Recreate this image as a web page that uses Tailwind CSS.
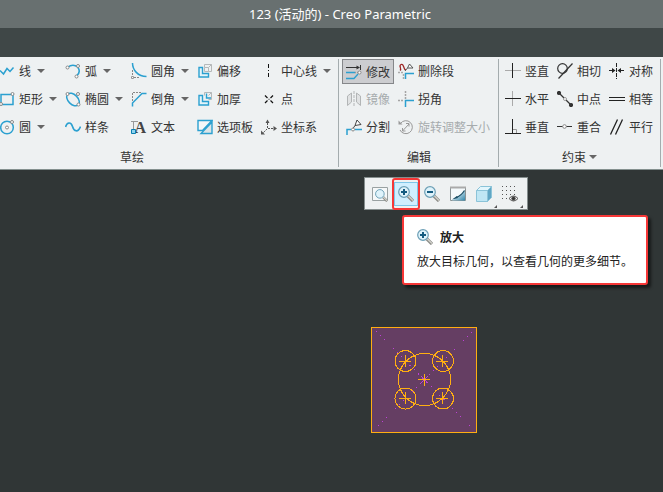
<!DOCTYPE html>
<html lang="zh-CN">

<head>
    <meta charset="UTF-8">
    <meta name="viewport" content="width=device-width, initial-scale=1.0">
    <script src="https://cdn.jsdelivr.net/npm/@tailwindcss/browser@4"></script>
    <title>123 (活动的) - Creo Parametric</title>
</head>

<body class="flex flex-col min-h-screen overflow-hidden bg-[#303636] text-[12px] leading-4 text-[#333] font-['Noto_Sans_CJK_SC',sans-serif]">
    <!-- 公用图标 -->
    <svg class="hidden">
        <symbol id="lens" viewBox="0 0 16 16">
            <path d="M10 10l5 5" stroke="#8b8b87" stroke-width="3.2" />
            <path d="M10 9.6l5 5" stroke="#d2d2cc" stroke-width="1.4" />
            <circle cx="6" cy="6" r="5.3" fill="#dff3fb" stroke="#6c9fb6" stroke-width="1.2" />
        </symbol>
        <symbol id="zoom-in" viewBox="0 0 16 16">
            <use href="#lens" />
            <path d="M3 6h6M6 3v6" stroke="#145b80" stroke-width="2" />
        </symbol>
        <symbol id="zoom-out" viewBox="0 0 16 16">
            <use href="#lens" />
            <path d="M3 6h6" stroke="#145b80" stroke-width="2" />
        </symbol>
        <symbol id="down" viewBox="0 0 8 4">
            <path d="M0 0h8L4 4z" fill="#666" />
        </symbol>
    </svg>

    <header class="h-7 pl-[17px] flex items-center justify-center bg-[#687070] text-white">
        <h1 class="text-[13px] font-['Noto_Sans','Noto_Sans_CJK_SC',sans-serif]">123 (活动的) - Creo Parametric</h1>
    </header>
    <div class="h-[29px] bg-[#3f4747]"></div>

    <nav class="flex bg-[#eef1f2] border-b border-[#84908f] whitespace-nowrap overflow-hidden">
        <!-- 草绘 -->
        <section class="w-[338px] shrink-0">
            <div class="-ml-px grid grid-cols-[66px_66px_66px_64px_77px] auto-rows-[28px]">
                <button class="flex items-center gap-1">
                    <svg class="size-4 shrink-0" viewBox="0 0 16 16" fill="none" stroke="#2ba0d0" stroke-width="1.5"><path d="M1 7.5L4.5 11 8 5.5l3 3 3.5-4" /></svg>
                    线<svg class="w-2 h-1 ml-0.5"><use href="#down" /></svg>
                </button>
                <button class="flex items-center gap-1">
                    <svg class="size-4 shrink-0" viewBox="0 0 16 16" fill="none" stroke="#2ba0d0" stroke-width="1.5"><path d="M3 4C6 1.5 10 1.5 12.5 4C15 7 15 10 11.5 13" /><g fill="#fff" stroke="#888" stroke-width="1"><circle cx="2.5" cy="4.5" r="1.5" /><circle cx="13" cy="3" r="1.5" /><circle cx="11.5" cy="13.5" r="1.5" /></g></svg>
                    弧<svg class="w-2 h-1 ml-0.5"><use href="#down" /></svg>
                </button>
                <button class="flex items-center gap-1">
                    <svg class="size-4 shrink-0" viewBox="0 0 16 16" fill="none" stroke="#2ba0d0" stroke-width="1.5"><path d="M1.5 7v7.5H9" stroke="#888" stroke-width="1" stroke-dasharray="2 1" /><path d="M1.5 0C1.5 7 7 13.500 15.500 13.500" /><path d="M.5 13.500h2v2h-2z" fill="#fff" stroke="#999" stroke-width="1" /></svg>
                    圆角<svg class="w-2 h-1 ml-0.5"><use href="#down" /></svg>
                </button>
                <button class="flex items-center gap-1">
                    <svg class="size-4 shrink-0" viewBox="0 0 16 16" fill="none" stroke="#2ba0d0" stroke-width="1.4"><path d="M7.500 4.500h4v4h-4zM7.500 4.500v-3h7v7h-3M11.500 4.500l3-3" stroke="#b5b8b9" stroke-width="1" /><path d="M5.500 4.500v6h6v3.500H2V4.500z" fill="#e4f4fa" /></svg>
                    偏移
                </button>
                <button class="flex items-center gap-1">
                    <svg class="size-4 shrink-0" viewBox="0 0 16 16" fill="none" stroke="#111"><path d="M7.500 1v14" stroke-dasharray="4 2 1 2" /></svg>
                    中心线<svg class="w-2 h-1 ml-0.5"><use href="#down" /></svg>
                </button>

                <button class="flex items-center gap-1">
                    <svg class="size-4 shrink-0" viewBox="0 0 16 16" fill="none" stroke="#2ba0d0" stroke-width="1.5"><path d="M2 3.500h12v10H2z" /><g fill="#fff" stroke="#888" stroke-width="1"><circle cx="13.500" cy="3" r="1.500" /><circle cx="2" cy="13" r="1.500" /></g></svg>
                    矩形<svg class="w-2 h-1 ml-0.5"><use href="#down" /></svg>
                </button>
                <button class="flex items-center gap-1">
                    <svg class="size-4 shrink-0" viewBox="0 0 16 16" fill="none" stroke="#2ba0d0" stroke-width="1.5"><ellipse cx="8" cy="8.500" rx="7.500" ry="4.800" transform="rotate(45 8 8.500)" /><g fill="#fff" stroke="#888" stroke-width="1"><circle cx="2.500" cy="3" r="1.500" /><circle cx="13" cy="3" r="1.500" /><circle cx="13.500" cy="13.500" r="1.500" /></g></svg>
                    椭圆<svg class="w-2 h-1 ml-0.5"><use href="#down" /></svg>
                </button>
                <button class="flex items-center gap-1">
                    <svg class="size-4 shrink-0" viewBox="0 0 16 16" fill="none" stroke="#2ba0d0" stroke-width="1.5"><path d="M1.500 10V1.500H10" stroke="#888" stroke-width="1" stroke-dasharray="2 1" /><path d="M1.500 15.500V12l9.500-9.500h4.500" /></svg>
                    倒角<svg class="w-2 h-1 ml-0.5"><use href="#down" /></svg>
                </button>
                <button class="flex items-center gap-1">
                    <svg class="size-4 shrink-0" viewBox="0 0 16 16" fill="none" stroke="#2ba0d0" stroke-width="1.4"><path d="M7.500 4.500v-3h7v7h-3M11.500 4.500l3-3" stroke="#b5b8b9" stroke-width="1" /><path d="M5.500 4.500v6h6v3.500H2V4.500z" fill="#e4f4fa" /><path d="M9.500 2.500v4.500h4.500" /></svg>
                    加厚
                </button>
                <button class="flex items-center gap-1">
                    <svg class="size-4 shrink-0" viewBox="0 0 16 16" fill="none" stroke="#111" stroke-width="1.2"><path d="M4 4.500l2.500 2.500M12 4.500L9.500 7M4 12l2.500-2.500M12 12L9.500 9.500" /><path d="M7.500 7.800h1v1h-1z" fill="#111" stroke="none" /></svg>
                    点
                </button>

                <button class="flex items-center gap-1">
                    <svg class="size-4 shrink-0" viewBox="0 0 16 16" fill="none" stroke="#2ba0d0" stroke-width="1.5"><circle cx="8" cy="8.500" r="6.300" /><g fill="#fff" stroke="#888" stroke-width="1"><circle cx="8" cy="8.500" r="1.500" /><circle cx="13" cy="3" r="1.500" /></g></svg>
                    圆<svg class="w-2 h-1 ml-0.5"><use href="#down" /></svg>
                </button>
                <button class="flex items-center gap-1">
                    <svg class="size-4 shrink-0" viewBox="0 0 16 16" fill="none" stroke="#2ba0d0" stroke-width="1.600"><path d="M.5 8C2 3 6 2.500 7.500 7.500S13 14 15.500 7.500" /></svg>
                    样条
                </button>
                <button class="flex items-center gap-1">
                    <svg class="size-4 shrink-0" viewBox="0 0 16 16" fill="none" stroke="#999"><path d="M0 2.500h7M2.500 2.500V10" /><text x="3.500" y="13.500" font-family="Liberation Serif" font-size="16" font-weight="bold" fill="#444" stroke="none">A</text><path d="M.5 10.500h4v4h-4z" fill="#8ed3ee" stroke="#087fb2" /></svg>
                    文本
                </button>
                <button class="flex items-center gap-1">
                    <svg class="size-4 shrink-0" viewBox="0 0 16 16" fill="none" stroke="#2ba0d0" stroke-width="1.4"><path d="M15 3v11.500H4z" fill="#dbe4e7" /><path d="M1 1.500h14L5.500 11.500H1z" fill="#f4f7f8" /></svg>
                    选项板
                </button>
                <button class="flex items-center gap-1">
                    <svg class="size-4 shrink-0" viewBox="0 0 16 16" fill="none" stroke="#555"><path d="M6.500 9V4M7 9.500h7M6 10l-4 4" stroke-dasharray="2 1" /><path d="M4.500 4l2-3.500 2 3.500zM12.500 7l3.500 2.500-3.500 2.500zM0 15.500V11.500l4 4z" fill="#555" stroke="none" /></svg>
                    坐标系
                </button>
            </div>
            <h2 class="pt-2 pb-1 pr-[74px] text-center">草绘</h2>
        </section>

        <!-- 编辑 -->
        <section class="w-40 shrink-0 relative before:absolute before:left-0 before:top-0.5 before:bottom-0.5 before:w-px before:bg-[#a4acae]">
            <div class="pl-2 grid grid-cols-[52px_1fr] auto-rows-[28px]">
                <button class="-ml-1 w-[52px] h-[25px] mt-0.5 pl-[3px] flex items-center gap-1 bg-[#cccdd0] border border-[#85878a]">
                    <svg class="size-4 shrink-0" viewBox="0 0 16 16" fill="none" stroke="#2ba0d0" stroke-width="1.3"><path d="M0 3.500h12M14.500 1v5" stroke="#333" stroke-width="1" /><path d="M10.500 1.500l3.500 2-3.500 2z" fill="#333" stroke="none" /><path d="M0 8.500h9M0 14.500h8l4-4.500" /><path d="M9 8.500h5" stroke="#999" stroke-dasharray="1 1" /><circle cx="13.500" cy="8.500" r="1.500" fill="#fff" stroke="#888" stroke-width="1" /></svg>
                    修改
                </button>
                <button class="flex items-center gap-1">
                    <svg class="size-4 shrink-0" viewBox="0 0 16 16" fill="none" stroke="#555"><path d="M0 9.500h6M5.500 11v5" stroke="#aaa" stroke-width="1.5" stroke-dasharray="2 1" /><path d="M2 7.500C4.500 6 0 3 3 1.500S5.500 7.500 8 6.500" stroke="#9c2424" stroke-width="1.3" /><path d="M9.500 5l2-4 3.500 4zM9.500 5L7 8" fill="#fff" /><path d="M7.500 16v-5.500H16" stroke="#2ba0d0" stroke-width="1.5" /></svg>
                    删除段
                </button>
                <button disabled class="flex items-center gap-1 text-[#a6abad]">
                    <svg class="size-4 shrink-0" viewBox="0 0 16 16" fill="none" stroke="#b2b5b6"><path d="M1.500 5l4-3v9l-4 3.500zM14.500 5l-4-3v9l4 3.500z" fill="#e0e2e3" /><path d="M8 0v16" stroke-dasharray="3 1" /></svg>
                    镜像
                </button>
                <button class="flex items-center gap-1">
                    <svg class="size-4 shrink-0" viewBox="0 0 16 16" fill="none" stroke="#a5a5a5" stroke-width="1.5"><path d="M0 9.500h6M7.500 0v9" stroke-dasharray="2 1" /><path d="M7.500 16V9.500H16" stroke="#2ba0d0" /></svg>
                    拐角
                </button>
                <button class="flex items-center gap-1">
                    <svg class="size-4 shrink-0" viewBox="0 0 16 16" fill="none" stroke="#2ba0d0" stroke-width="1.5"><path d="M1 16v-5.500h4M9 10.500h7" /><path d="M9 6.500l2-5.500 4 4.500zM9 6.500l-2 3" fill="#fff" stroke="#444" stroke-width="1" /><circle cx="7" cy="10.500" r="1.500" fill="#fff" stroke="#888" stroke-width="1" /></svg>
                    分割
                </button>
                <button disabled class="flex items-center gap-1 text-[#a6abad]">
                    <svg class="size-4 shrink-0" viewBox="0 0 16 16" fill="none" stroke="#999" stroke-width="1"><path d="M2.500 4.500A6.500 6.500 0 1 1 2 11M4.500 12L11 5M4.500 9v3h3M8 4.500h3v3" /><path d="M.5 1.500v4h4z" fill="#999" stroke="none" /></svg>
                    旋转调整大小
                </button>
            </div>
            <h2 class="pt-2 pb-1 pl-0.5 text-center">编辑</h2>
        </section>

        <!-- 约束 -->
        <section class="w-[163px] shrink-0 relative before:absolute before:left-0 before:top-0.5 before:bottom-0.5 before:w-px before:bg-[#a4acae] after:absolute after:right-0 after:top-0.5 after:bottom-0.5 after:w-px after:bg-[#a4acae]">
            <div class="pl-[7px] grid grid-cols-3 auto-rows-[28px]">
                <button class="flex items-center gap-1">
                    <svg class="size-4 shrink-0" viewBox="0 0 16 16" stroke="#222"><path d="M0 7.500h16" stroke="#aaa" /><path d="M7.500 0v15" /></svg>
                    竖直
                </button>
                <button class="flex items-center gap-1">
                    <svg class="size-4 shrink-0" viewBox="0 0 16 16" fill="none" stroke="#333" stroke-width="1.2"><circle cx="5.500" cy="5.500" r="4.800" /><path d="M1.500 15.500L15.500 0.500" /></svg>
                    相切
                </button>
                <button class="flex items-center gap-1">
                    <svg class="size-4 shrink-0" viewBox="0 0 16 16" fill="none" stroke="#222"><path d="M7.500 0v16" stroke-dasharray="4 1" /><path d="M0 7.500h4M11 7.500h4" /><path d="M3 5l3.500 2.500L3 10zM12 5L8.500 7.500 12 10z" fill="#222" stroke="none" /></svg>
                    对称
                </button>
                <button class="flex items-center gap-1">
                    <svg class="size-4 shrink-0" viewBox="0 0 16 16" stroke="#222"><path d="M7.500 0v15" stroke="#aaa" /><path d="M0 7.500h16" /></svg>
                    水平
                </button>
                <button class="flex items-center gap-1">
                    <svg class="size-4 shrink-0" viewBox="0 0 16 16" fill="#333" stroke="#333" stroke-width="1.2"><path d="M2 2l12 12" /><circle cx="2" cy="2" r="1.500" /><circle cx="14" cy="14" r="1.500" /><circle cx="8" cy="8" r="1.500" fill="#fff" stroke="#999" stroke-width="1" /></svg>
                    中点
                </button>
                <button class="flex items-center gap-1">
                    <svg class="size-4 shrink-0" viewBox="0 0 16 16" stroke="#222"><path d="M0 6.500h16M0 9.500h16" /></svg>
                    相等
                </button>
                <button class="flex items-center gap-1">
                    <svg class="size-4 shrink-0" viewBox="0 0 16 16" fill="none" stroke="#222"><path d="M8 10.500h3.500V14" stroke="#999" /><path d="M0 14.500h16M7.500 0v14" /></svg>
                    垂直
                </button>
                <button class="flex items-center gap-1">
                    <svg class="size-4 shrink-0" viewBox="0 0 16 16" stroke="#333"><path d="M0 7.500h15" /><circle cx="7.500" cy="7.500" r="1.800" fill="#fff" stroke="#888" /></svg>
                    重合
                </button>
                <button class="flex items-center gap-1">
                    <svg class="size-4 shrink-0" viewBox="0 0 16 16" stroke="#222" stroke-width="1.3"><path d="M1.500 15.500L8.500.5M6.500 15.500L13.500.5" /></svg>
                    平行
                </button>
            </div>
            <h2 class="pt-2 pb-1">
                <button class="mx-auto flex items-center gap-[3px]">约束<svg class="w-2 h-1"><use href="#down" /></svg></button>
            </h2>
        </section>
    </nav>

    <main class="relative grow">
        <!-- 视图工具栏 -->
        <div class="absolute left-[364px] top-[7px] h-[33px] w-[164px] pl-0.5 flex items-center bg-[#eef1f2] border border-[#858e8e]">
            <button aria-label="重新调整" class="w-[26px] h-6 flex items-center justify-center">
                <svg class="size-4" viewBox="0 0 16 16"><path d="M.5 1.500h15v13H.5z" fill="#f5f8f9" stroke="#99a1a2" /><svg x="3" y="3" width="13" height="13"><use href="#lens" /></svg></svg>
            </button>
            <button aria-label="放大" class="relative w-[26px] h-6 flex items-center justify-center">
                <span class="w-6 h-6 flex items-center justify-center bg-[#d0efff] border border-[#7fc6e8]"><svg class="size-4"><use href="#zoom-in" /></svg></span>
                <span class="absolute -inset-x-px -inset-y-1 rounded-[3px] border-2 border-[#f63737]"></span>
            </button>
            <button aria-label="缩小" class="w-[26px] h-6 flex items-center justify-center">
                <svg class="size-4"><use href="#zoom-out" /></svg>
            </button>
            <button aria-label="重画" class="w-[26px] h-6 flex items-center justify-center">
                <svg class="size-4" viewBox="0 0 16 16">
                    <defs><linearGradient id="blue" x2="1" y2="1"><stop offset=".2" stop-color="#f4fafc" /><stop offset="1" stop-color="#2f86ab" /></linearGradient></defs>
                    <path d="M.5 1.500h15v13H.5z" fill="#f4f9fb" stroke="#8a9395" /><path d="M15 4Q12 10 5 12L2 14.500H15z" fill="url(#blue)" /><path d="M0 1.500h16" stroke="#aaa" stroke-width="2" /><path d="M14.500 4.500Q11 10 6 11.500" fill="none" stroke="#174c63" stroke-width="1.3" /><path d="M2 13.500l5-3.500 1 2z" fill="#174c63" />
                </svg>
            </button>
            <button aria-label="显示样式" class="relative w-[26px] h-6 flex items-center justify-center">
                <svg class="size-4" viewBox="0 0 16 16" stroke="#8bc3d8"><path d="M.5 4.500h11v11H.5z" fill="#bfe6f4" /><path d="M.5 4.500l4-4h11l-4 4z" fill="#e2f6fd" /><path d="M11.500 4.500l4-4v11l-4 4z" fill="#5fa6c4" /></svg>
                <svg class="absolute right-0 -bottom-0.5 size-[3px]" viewBox="0 0 4 4"><path d="M4 0v4H0z" fill="#555" /></svg>
            </button>
            <button aria-label="草绘器显示过滤器" class="relative w-[26px] h-6 flex items-center justify-center">
                <svg class="size-4" viewBox="0 0 16 16" fill="none" stroke="#555"><path d="M0 .5h16M0 4.500h16M0 8.500h16M0 12.500h7" stroke-dasharray="1 3" /><path d="M7 12.500q4.500-5 9 0q-4.500 5-9 0z" fill="#fff" /><circle cx="11.500" cy="12.500" r="1.800" fill="#333" /></svg>
                <svg class="absolute right-0 -bottom-0.5 size-[3px]" viewBox="0 0 4 4"><path d="M4 0v4H0z" fill="#555" /></svg>
            </button>
        </div>

        <!-- 提示 -->
        <div role="tooltip" class="absolute left-[402px] top-[45px] w-[246px] h-[70px] pl-[13px] pt-3 rounded-[3px] border-2 border-[#f63737] bg-white text-[#222] shadow-[3px_3px_3px_#0008] whitespace-nowrap">
            <div class="flex items-center gap-[7px] font-bold"><svg class="size-4"><use href="#zoom-in" /></svg>放大</div>
            <p class="mt-2">放大目标几何，以查看几何的更多细节。</p>
        </div>

        <!-- 草绘几何 -->
        <svg class="absolute left-[371px] top-[157px] w-[106px] h-[106px]" viewBox="0 0 106 106" fill="none" stroke="#ffae12" shape-rendering="crispEdges">
            <path d="M.5.5h105v105H.5z" fill="#653e63" />
            <path d="M5 4l96 97M101 5L4 102" stroke="#bd42d5" stroke-dasharray="1 5" />
            <circle cx="53.500" cy="52.500" r="26" />
            <circle cx="34.500" cy="34" r="10.500" />
            <circle cx="72" cy="34" r="10.500" />
            <circle cx="34.500" cy="71.500" r="10.500" />
            <circle cx="72" cy="71.500" r="10.500" />
            <path d="M50 49l7 7M57 49l-7 7" stroke="#bd42d5" />
            <path d="M28 34.500h12M34.500 28v12M65 34.500h12M71.500 28v12M28 71.500h12M34.500 65v12M65 71.500h12M71.500 65v12M47 52.500h12M53.500 47v12" />
        </svg>
    </main>
</body>

</html>
